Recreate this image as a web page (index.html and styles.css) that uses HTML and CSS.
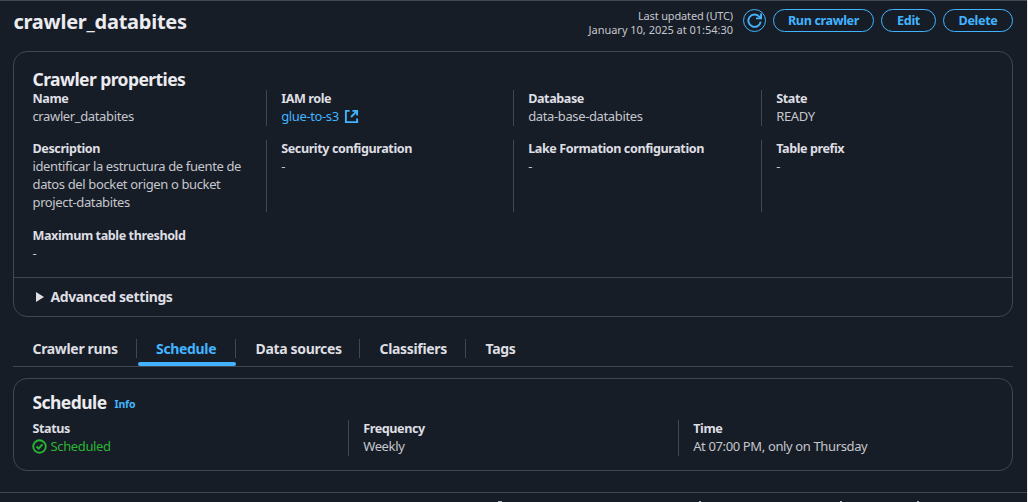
FILE: index.html
```html
<!DOCTYPE html>
<html lang="en">
<head>
<meta charset="utf-8">
<title>crawler_databites</title>
<link rel="stylesheet" href="styles.css">
</head>
<body>
<main class="page">
  <header class="page-header">
    <h1 class="title">crawler_databites</h1>
    <div class="updated"><span class="updated-label">Last updated (UTC)</span><br>January 10, 2025 at 01:54:30</div>
    <button class="btn btn-icon" aria-label="Refresh"><svg viewBox="0 0 16 16" width="15" height="15" fill="none" stroke="currentColor" stroke-width="2"><path d="M14.6 9.2A6.6 6.6 0 1 1 13.2 4L14.6 5.6"/><path d="M15 .5v5.2H9.6"/></svg></button>
    <button class="btn btn-run">Run crawler</button>
    <button class="btn btn-edit">Edit</button>
    <button class="btn btn-delete">Delete</button>
  </header>

  <section class="card">
    <h2 class="card-title">Crawler properties</h2>
    <div class="props">
      <div class="cell"><div class="key">Name</div><div>crawler_databites</div></div>
      <div class="cell"><div class="key">IAM role</div><div class="link">glue-to-s3<svg viewBox="0 0 16 16" width="15" height="15" fill="none" stroke="currentColor" stroke-width="2"><path d="M6 2H2v12h12v-4"/><path d="M9 2h5v5M13.7 2.3 7.5 8.5"/></svg></div></div>
      <div class="cell"><div class="key">Database</div><div>data-base-databites</div></div>
      <div class="cell"><div class="key">State</div><div>READY</div></div>
      <div class="cell"><div class="key">Description</div><div>identificar la estructura de fuente de datos del bocket origen o bucket project-databites</div></div>
      <div class="cell"><div class="key">Security configuration</div><div>-</div></div>
      <div class="cell"><div class="key">Lake Formation configuration</div><div>-</div></div>
      <div class="cell"><div class="key">Table prefix</div><div>-</div></div>
      <div class="cell last-row"><div class="key">Maximum table threshold</div><div>-</div></div>
    </div>
    <div class="advanced"><i class="caret"></i><span>Advanced settings</span></div>
  </section>

  <nav class="tabs">
    <a class="tab">Crawler runs</a>
    <a class="tab active">Schedule</a>
    <a class="tab">Data sources</a>
    <a class="tab">Classifiers</a>
    <a class="tab">Tags</a>
  </nav>

  <section class="card schedule">
    <h2 class="card-title">Schedule<small class="info">Info</small></h2>
    <div class="sched">
      <div class="cell"><div class="key">Status</div><div class="ok"><svg viewBox="0 0 16 16" width="15" height="15" fill="none" stroke="currentColor" stroke-width="2"><circle cx="8" cy="8" r="6.7"/><path d="m4.8 8 2.3 2.3 4-4.6"/></svg>Scheduled</div></div>
      <div class="cell"><div class="key">Frequency</div><div>Weekly</div></div>
      <div class="cell"><div class="key">Time</div><div>At 07:00 PM, only on Thursday</div></div>
    </div>
  </section>
  <footer class="footer"><i class="tick wide"></i><i class="tick"></i><i class="tick"></i><i class="tick"></i></footer>
</main>
</body>
</html>
```
FILE: styles.css
```css
* { box-sizing: border-box; }
html, body { margin: 0; height: 502px; overflow: hidden; }
html { background: #e8e9eb; }
body {
  color: #c6c6cd;
  font: 13px/18px "Noto Sans", "Open Sans", sans-serif;
  letter-spacing: -0.37px;
}
h1, h2 { margin: 0; }
.page { width: 1027px; height: 502px; background: #161d26; border-top: 1px solid #424650; display: flex; flex-direction: column; }
.page-header { height: 50px; flex: none; padding: 8px 14px 0 13.5px; display: flex; align-items: flex-start; }
.title { flex: 1; padding-top: 1px; font-size: 20px; line-height: 24px; letter-spacing: -0.25px; color: #ebebf0; }
.updated { font-size: 11px; line-height: 14px; letter-spacing: -0.02px; text-align: right; margin-right: 10px; }
.updated-label { letter-spacing: -0.15px; }
.btn {
  height: 23px; border: 1.5px solid #42b4ff; border-radius: 12px; background: none;
  color: #42b4ff; font: 700 12.6px/18px "Noto Sans", sans-serif; letter-spacing: -0.35px;
  padding: 1px 0 0; margin-right: 7px; white-space: nowrap;
  display: flex; align-items: center; justify-content: center;
}
.btn-icon { width: 23px; padding: 0; }
.btn-run { width: 101px; }
.btn-edit { width: 55px; }
.btn-delete { width: 70px; margin-right: 0; }
.card { margin: 0 14px 0 13px; border: 1px solid #424650; border-radius: 14px; height: 266px; flex: none; }
.card-title { display: flex; align-items: baseline; height: 38px; padding: 16px 0 0 18.5px; font-size: 17.5px; line-height: 22px; letter-spacing: -0.57px; color: #ebebf0; }
.props { display: grid; grid-template-columns: 252px 247px 248px 1fr; grid-template-rows: 36px 72px 36px; row-gap: 14px; height: 187px; }
.cell { padding-left: 14.2px; border-left: 1px solid #424650; }
.cell:first-child, .props .cell:nth-child(4n+1) { border-left: 0; padding: 0 18px 0 18.5px; }
.last-row { margin-top: 1px; }
.key { margin-bottom: -1px; font-size: 12.6px; letter-spacing: -0.42px; font-weight: 700; color: #dedee3; }
.link { color: #42b4ff; display: flex; align-items: center; gap: 5px; height: 18px; }
.advanced { border-top: 1px solid #424650; height: 39px; display: flex; align-items: center; padding-left: 22px; gap: 6.5px; font-weight: 700; font-size: 14px; letter-spacing: -0.4px; color: #dedee3; }
.caret { border-left: 8px solid #dedee3; border-top: 5px solid transparent; border-bottom: 5px solid transparent; }
.tabs { margin: 0 14px 0 13px; height: 50px; flex: none; border-bottom: 1px solid #424650; display: flex; align-items: flex-start; padding-top: 22px; }
.tab { height: 19px; padding: 0 18px 0 19.5px; border-right: 1px solid #424650; font-weight: 700; font-size: 14px; line-height: 20px; letter-spacing: -0.33px; color: #dedee3; white-space: nowrap; }
.tab:nth-child(1), .tab:nth-child(3) { width: 124px; }
.tab:nth-child(4) { width: 106px; }
.tab:last-child { border-right: 0; }
.tab.active { width: 99px; padding-left: 19px; color: #42b4ff; }
.tab.active::after { content: ""; display: block; width: 98px; height: 4px; margin: 3px 0 0 -18px; border-radius: 2px; background: #42b4ff; }
.schedule { height: 93px; margin-top: 11px; }
.schedule .card-title { height: 41px; padding-top: 12px; }
.sched { display: grid; grid-template-columns: 334px 330px 1fr; height: 36px; }
.info { font-size: 10.5px; line-height: 20px; letter-spacing: -0.2px; color: #42b4ff; margin-left: 8px; align-self: flex-start; padding-top: 3px; }
.ok { color: #2bb534; display: flex; align-items: center; gap: 4px; margin-left: -1px; }
.footer { flex: 1; margin-top: 21px; border-top: 1px solid #424650; display: grid; grid-template-columns: 201px 141px 77px 3px; padding-left: 498px; align-items: end; }
.tick { width: 2px; height: 1px; background: #b4b5ba; }
.tick.wide { width: 4px; }
```
